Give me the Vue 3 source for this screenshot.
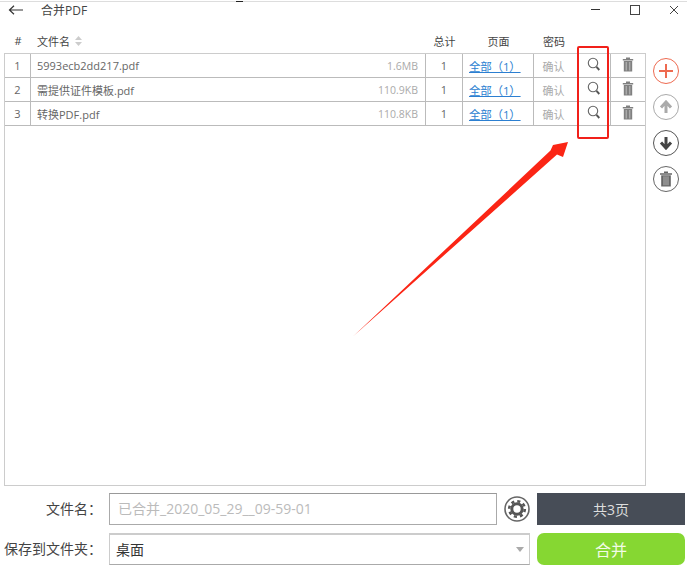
<script setup>
const rows = [
  { id: 1, name: '5993ecb2dd217.pdf', size: '1.6MB' },
  { id: 2, name: '需提供证件模板.pdf', size: '110.9KB' },
  { id: 3, name: '转换PDF.pdf', size: '110.8KB' },
]
</script>

<template>
  <div class="app">
    <div class="notch"></div>
    <header class="titlebar">
      <svg class="back" width="16" height="10" viewBox="0 0 16 10"><path d="M15 5H1.5M6 .8 1.5 5 6 9.2" fill="none" stroke="#333" stroke-width="1.2"/></svg>
      <span class="title">合并PDF</span>
      <div class="winbtns">
        <span class="winbtn"><i class="min"></i></span>
        <span class="winbtn"><i class="max"></i></span>
        <span class="winbtn close">
          <svg width="10" height="10" viewBox="0 0 10 10"><path d="M1 1l8 8M9 1 1 9" stroke="#444" stroke-width="1"/></svg>
        </span>
      </div>
    </header>

    <div class="grid head">
      <div class="c center">#</div>
      <div class="c namehead">文件名
        <svg width="7" height="10" viewBox="0 0 7 10"><path d="M3.5 0 7 4H0zM3.5 10 0 6h7z" fill="#ccc"/></svg>
      </div>
      <div class="c center">总计</div>
      <div class="c center">页面</div>
      <div class="c center pw">密码</div>
    </div>

    <div class="body">
      <div class="panel">
        <div v-for="r in rows" :key="r.id" class="grid row">
          <div class="c center cell num">{{ r.id }}</div>
          <div class="c cell file"><span class="fname">{{ r.name }}</span><span class="fsize">{{ r.size }}</span></div>
          <div class="c center cell num">1</div>
          <div class="c cell pages"><a class="link">全部（1）</a></div>
          <div class="c center cell confirm">确认</div>
          <div class="c center cell iconcell">
            <svg width="14" height="15" viewBox="0 0 14 15"><circle cx="6" cy="6" r="4.7" fill="none" stroke="#666" stroke-width="1.1"/><path d="M9.5 9.8 12.3 13" stroke="#555" stroke-width="1.9"/></svg>
          </div>
          <div class="c center last iconcell">
            <svg width="12" height="15" viewBox="0 0 12 15"><path d="M4 1.2h4M.8 2.8h10.4" stroke="#808080" stroke-width="1.4"/><path d="M1.8 4h8.4v10.5H1.8z" fill="#808080"/><path d="M4.2 5v8.5M7.8 5v8.5" stroke="#c4c4c4" stroke-width=".9"/></svg>
          </div>
        </div>
      </div>
      <aside class="side">
        <button class="circle add">
          <svg width="16" height="16" viewBox="0 0 16 16"><path d="M8 1v14M1 8h14" stroke="#ee6a50" stroke-width="2"/></svg>
        </button>
        <button class="circle up">
          <svg width="14" height="14" viewBox="0 0 14 14"><path d="M7 13V3M2 7.5 7 2l5 5.500" fill="none" stroke="#aaa" stroke-width="3"/></svg>
        </button>
        <button class="circle down">
          <svg width="14" height="14" viewBox="0 0 14 14"><path d="M7 1v10M2 6.500 7 12l5-5.500" fill="none" stroke="#444" stroke-width="3"/></svg>
        </button>
        <button class="circle del">
          <svg width="14" height="16" viewBox="0 0 14 16"><path d="M5 1.300h4M1 3h12" stroke="#666" stroke-width="1.400"/><path d="M2.200 4.300h9.600V15.500H2.200z" fill="#666"/><path d="M5 5.300v9M7 5.300v9M9 5.300v9" stroke="#ccc" stroke-width=".8"/></svg>
        </button>
      </aside>
    </div>

    <div class="form">
      <div class="frow">
        <label class="lbl">文件名：</label>
        <div class="field input">已合并_2020_05_29__09-59-01</div>
        <div class="gearbox">
          <svg width="26" height="26" viewBox="0 0 26 26">
            <circle cx="13" cy="13" r="12" fill="none" stroke="#666" stroke-width="1.600"/>
            <circle cx="13" cy="13" r="5.200" fill="none" stroke="#555" stroke-width="3"/>
            <circle cx="13" cy="13" r="7.800" fill="none" stroke="#555" stroke-width="2.600" stroke-dasharray="3.100 3.030"/>
          </svg>
        </div>
        <button class="btn dark">共3页</button>
      </div>
      <div class="frow">
        <label class="lbl">保存到文件夹：</label>
        <div class="field select">桌面<i class="caret"></i></div>
        <button class="btn green">合并</button>
      </div>
    </div>

    <div class="callout"></div>
    <svg class="arrow" width="687" height="567" viewBox="0 0 687 567">
      <path d="M353.500 336 550.500 150.500 553 145 568 142 563 157 557 154.500Z" fill="#fb2515"/>
    </svg>
  </div>
</template>

<style>
html, body { margin: 0; background: #fff; }
</style>

<style scoped>
.app {
  position: relative;
  width: 687px;
  height: 567px;
  overflow: hidden;
  background: #fff;
  font-family: "Open Sans", "Noto Sans CJK SC", sans-serif;
  font-size: 12px;
  color: #333;
  box-sizing: border-box;
  border-top: 1px solid transparent;
}
.notch {
  position: absolute;
  left: 236px;
  top: -1px;
  width: 7px;
  height: 2px;
  background: #222;
}
.titlebar {
  display: flex;
  align-items: center;
  height: 15px;
  border-top: 1px solid #ddd;
  padding-left: 8px;
}
.back { flex: none; margin-top: 1px; }
.title { margin-left: 17px; font-size: 12px; color: #444; }
.winbtns { margin-left: auto; display: flex; }
.winbtn { width: 39.500px; display: flex; justify-content: center; align-items: center; height: 15px; }
.close { width: 26px; margin-left: 6.500px; }
.min { display: block; width: 9px; height: 1px; background: #333; }
.max { display: block; width: 8px; height: 8px; border: 1px solid #444; }

.grid {
  display: grid;
  grid-template-columns: 26px 395px 37px 71px 44px 33px 34px;
}
.head {
  margin: 13px 0 0 5px;
  height: 23px;
  padding-bottom: 2px;
  box-sizing: border-box;
  font-size: 11px;
  color: #444;
}
.c { display: flex; align-items: center; min-width: 0; box-sizing: border-box; }
.center { justify-content: center; }
.namehead { padding-left: 6px; gap: 5px; }
.pw { padding-right: 4px; }

.body { display: flex; }
.panel {
  margin-left: 4px;
  width: 642px;
  height: 433px;
  box-sizing: border-box;
  border: 1px solid #ccc;
}
.row { height: 24px; border-bottom: 1px solid #bbb; box-sizing: border-box; font-size: 11px; }
.iconcell { padding-bottom: 2px; }
.cell { border-right: 1px solid #bbb; }
.last { border: none; }
.num { color: #666; }
.file { padding: 0 7px 0 6px; justify-content: space-between; }
.fname { color: #666; }
.fsize { color: #aaa; font-size: 10.500px; }
.pages { padding-left: 6px; }
.link { color: #2c7fd1; text-decoration: underline; font-size: 11.500px; white-space: nowrap; letter-spacing: -.2px; }
.confirm { color: #aaa; padding-right: 4px; }

.side {
  display: flex;
  flex-direction: column;
  gap: 10px;
  margin: 5px 0 0 7px;
}
.circle {
  width: 26px;
  height: 26px;
  padding: 0;
  border-radius: 50%;
  background: #fff;
  box-sizing: border-box;
  display: flex;
  align-items: center;
  justify-content: center;
}
.add { border: 1.500px solid #ee6a50; }
.up { border: 1.500px solid #aaa; }
.down { border: 1.500px solid #555; }
.del { border: 1.500px solid #666; }

.form { display: flex; flex-direction: column; gap: 8px; margin-top: 7px; }
.frow { display: flex; height: 32px; margin-left: 4px; }
.lbl {
  width: 98px;
  margin-right: 7px;
  text-align: right;
  white-space: nowrap;
  font-size: 14px;
  line-height: 32px;
  color: #444;
}
.field {
  box-sizing: border-box;
  height: 32px;
  line-height: 30px;
  font-size: 14px;
}
.input {
  width: 388px;
  padding-left: 8px;
  border: 1px solid #aaa;
  border-top: 1px solid #999;
  color: #bbb;
}
.select {
  position: relative;
  width: 421px;
  margin-right: 7px;
  padding-left: 6px;
  border: 1px solid #ccc;
  border-top: 2px solid #ccc;
  border-bottom: 1px solid #aaa;
  color: #333;
}
.caret {
  position: absolute;
  right: 5px;
  top: 12px;
  border-left: 4px solid transparent;
  border-right: 4px solid transparent;
  border-top: 5px solid #aaa;
}
.gearbox { width: 40px; display: flex; align-items: center; justify-content: center; }
.btn {
  width: 148px;
  height: 32px;
  border: none;
  padding: 0;
  font-family: inherit;
}
.dark { background: #474d57; color: #ddd; font-size: 14px; }
.green { background: #86d732; color: #f2fbe6; border-radius: 7px; font-size: 16px; }

.callout {
  position: absolute;
  left: 577px;
  top: 45px;
  width: 32px;
  height: 93px;
  box-sizing: border-box;
  border: 2.500px solid #f1201a;
  border-radius: 2px;
}
.arrow { position: absolute; left: 0; top: -1px; pointer-events: none; }
</style>
